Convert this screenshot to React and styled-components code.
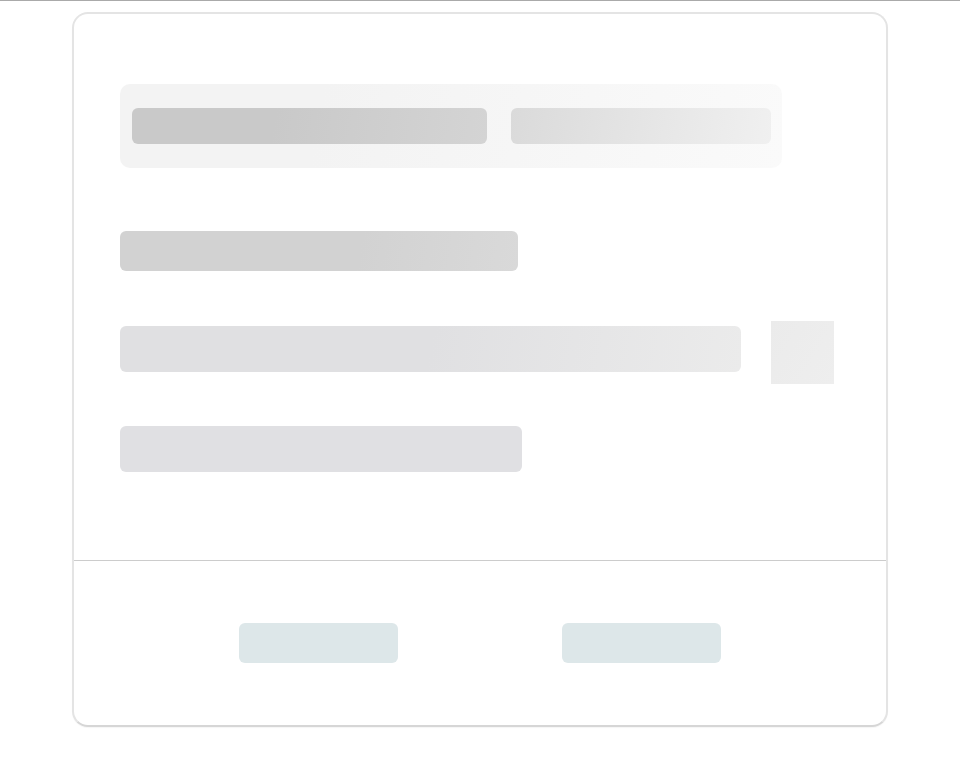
import React from "react";
import styled, { createGlobalStyle } from "styled-components";

const GlobalStyle = createGlobalStyle`
  html, body {
    margin: 0;
    padding: 0;
    background: #ffffff;
    font-family: "Liberation Sans", Arial, sans-serif;
  }
`;

const Page = styled.div`
  min-height: 767px;
  border-top: 1px solid #aaaaaa;
  box-sizing: border-box;
  padding-top: 11px;
  display: flex;
  justify-content: center;
`;

const Card = styled.div`
  width: 816px;
  height: 715px;
  box-sizing: border-box;
  border: 2px solid #e4e4e4;
  border-bottom-color: #d6d6d6;
  border-radius: 16px;
  background: #fff;
  display: flex;
  flex-direction: column;
  box-shadow: 0 1px 1px rgba(0, 0, 0, 0.04);
`;

const Body = styled.div`
  height: 547px;
  box-sizing: border-box;
  padding: 70px 51px 0 46px;
  display: flex;
  flex-direction: column;
  border-bottom: 1px solid #cccccc;
`;

const Tabs = styled.div`
  width: 662px;
  height: 84px;
  box-sizing: border-box;
  padding: 0 11px 0 12px;
  border-radius: 10px;
  background: linear-gradient(100deg, #f3f3f3 30%, #f6f6f6 60%, #fafafa 100%);
  display: flex;
  align-items: center;
  gap: 24px;
`;

const Bone = styled.div`
  height: ${(p) => p.h}px;
  width: ${(p) => (p.w ? `${p.w}px` : "auto")};
  flex: ${(p) => (p.grow ? 1 : "none")};
  margin-top: ${(p) => p.mt || 0}px;
  border-radius: 6px;
  background: ${(p) => p.bg};
`;

const Row = styled.div`
  display: flex;
  align-items: flex-start;
  gap: 30px;
  margin-top: ${(p) => p.mt || 0}px;
`;

const Square = styled.div`
  width: 63px;
  height: 63px;
  flex: none;
  background: linear-gradient(120deg, #ebebeb, #eeeeee);
`;

const Footer = styled.div`
  flex: 1;
  display: flex;
  align-items: center;
  justify-content: space-evenly;
`;

const Button = styled.div`
  width: 159px;
  height: 40px;
  border-radius: 6px;
  background: #dde7e9;
`;

export default function App() {
  return (
    <>
      <GlobalStyle />
      <Page>
        <Card>
          <Body>
            <Tabs>
              <Bone h={36} w={355} bg="linear-gradient(100deg, #c9c9c9 40%, #d4d4d4 100%)" />
              <Bone h={36} grow bg="linear-gradient(100deg, #dadada 0%, #f0f0f0 100%)" />
            </Tabs>
            <Bone h={40} w={398} mt={63} bg="linear-gradient(100deg, #d2d2d2 60%, #d9d9d9 100%)" />
            <Row mt={50}>
              <Bone h={46} w={621} mt={5} bg="linear-gradient(100deg, #e0e0e2 50%, #ebebeb 100%)" />
              <Square />
            </Row>
            <Bone h={46} w={402} mt={42} bg="#e0e0e3" />
          </Body>
          <Footer>
            <Button />
            <Button />
          </Footer>
        </Card>
      </Page>
    </>
  );
}
